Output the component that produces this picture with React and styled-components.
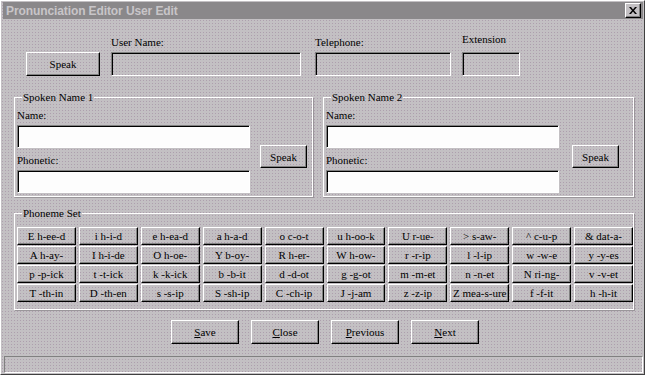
import React from "react";
import styled, { createGlobalStyle } from "styled-components";

const GlobalStyle = createGlobalStyle`
  html, body {
    margin: 0;
    padding: 0;
    background: #c3c0c3;
  }
  * {
    box-sizing: border-box;
  }
`;

const phonemes = [
  ["E h-ee-d", "i h-i-d", "e h-ea-d", "a h-a-d", "o c-o-t", "u h-oo-k", "U r-ue-", "> s-aw-", "^ c-u-p", "& dat-a-"],
  ["A h-ay-", "I h-i-de", "O h-oe-", "Y b-oy-", "R h-er-", "W h-ow-", "r -r-ip", "l -l-ip", "w -w-e", "y -y-es"],
  ["p -p-ick", "t -t-ick", "k -k-ick", "b -b-it", "d -d-ot", "g -g-ot", "m -m-et", "n -n-et", "N ri-ng-", "v -v-et"],
  ["T -th-in", "D -th-en", "s -s-ip", "S -sh-ip", "C -ch-ip", "J -j-am", "z -z-ip", "Z mea-s-ure", "f -f-it", "h -h-it"],
];

function App() {
  return (
    <>
      <GlobalStyle />
      <Window>
        <TitleBar>
          <Title>Pronunciation Editor User Edit</Title>
          <CloseBox aria-label="close">
            <svg width="8" height="7" viewBox="0 0 8 7">
              <path d="M0 0h2l2 2.5L6 0h2L5 3.5 8 7H6L4 4.5 2 7H0l3-3.5z" fill="#000" />
            </svg>
          </CloseBox>
        </TitleBar>

        <TopRow>
          <Button $w={74} $h={24}>Speak</Button>
          <Field $ml={11}>
            <Label>User Name:</Label>
            <TextBox $w={190} $h={24} />
          </Field>
          <Field $ml={14}>
            <Label>Telephone:</Label>
            <TextBox $w={136} $h={24} />
          </Field>
          <Field $ml={11}>
            <Label $lift={3}>Extension</Label>
            <TextBox $w={58} $h={24} />
          </Field>
        </TopRow>

        <GroupRow>
          <Group $w={299}>
            <Legend>Spoken Name 1</Legend>
            <GroupBody $gap={10}>
              <Fields>
                <Label>Name:</Label>
                <TextBox $w={233} $h={23} $white />
                <Label $top={6}>Phonetic:</Label>
                <TextBox $w={233} $h={23} $white />
              </Fields>
              <Button $w={47} $h={23} $mt={36}>Speak</Button>
            </GroupBody>
          </Group>
          <Group $w={311}>
            <Legend>Spoken Name 2</Legend>
            <GroupBody $gap={13}>
              <Fields>
                <Label>Name:</Label>
                <TextBox $w={233} $h={23} $white />
                <Label $top={6}>Phonetic:</Label>
                <TextBox $w={233} $h={23} $white />
              </Fields>
              <Button $w={47} $h={23} $mt={36}>Speak</Button>
            </GroupBody>
          </Group>
        </GroupRow>

        <PhonemeGroup>
          <Legend>Phoneme Set</Legend>
          <PhonemeGrid>
            {phonemes.flat().map((p) => (
              <PhonemeButton key={p}>{p}</PhonemeButton>
            ))}
          </PhonemeGrid>
        </PhonemeGroup>

        <ActionRow>
          <Button $w={68} $h={24}><u>S</u>ave</Button>
          <Button $w={68} $h={24}><u>C</u>lose</Button>
          <Button $w={68} $h={24}><u>P</u>revious</Button>
          <Button $w={68} $h={24}><u>N</u>ext</Button>
        </ActionRow>

        <StatusBar />
      </Window>
    </>
  );
}

export default App;

const Window = styled.div`
  width: 645px;
  height: 375px;
  display: flex;
  flex-direction: column;
  padding: 1px 1px 1px 2px;
  border: 1px solid;
  border-color: #ffffff #404040 #404040 #ffffff;
  background-color: #c3c0c3;
  background-image: radial-gradient(circle, #ad9fad 0.7px, transparent 0.8px);
  background-size: 3px 3px;
  font-family: "Liberation Serif", "Times New Roman", serif;
  font-size: 11px;
  color: #000;
`;

const TitleBar = styled.div`
  height: 18px;
  display: flex;
  align-items: center;
  justify-content: space-between;
  padding: 0 2px 0 3px;
  background-color: #8a888a;
`;

const Title = styled.span`
  font-family: "Liberation Sans", Arial, sans-serif;
  font-weight: bold;
  font-size: 12px;
  color: #c8c5c8;
  letter-spacing: -0.1px;
`;

const CloseBox = styled.button`
  width: 16px;
  height: 15px;
  padding: 0;
  display: flex;
  align-items: center;
  justify-content: center;
  background: #c3c0c3;
  border: 1px solid;
  border-color: #ffffff #000000 #000000 #ffffff;
  box-shadow: inset -1px -1px #808080;
`;

const TopRow = styled.div`
  display: flex;
  align-items: flex-end;
  padding: 14px 0 0 23px;
`;

const Field = styled.div`
  display: flex;
  flex-direction: column;
  margin-left: ${(p) => p.$ml || 0}px;
`;

const Label = styled.div`
  line-height: 13px;
  margin-top: ${(p) => p.$top || 0}px;
  margin-bottom: ${(p) => 3 + (p.$lift || 0)}px;
  white-space: nowrap;
`;

const TextBox = styled.div`
  width: ${(p) => p.$w}px;
  height: ${(p) => p.$h}px;
  border: 1px solid;
  border-color: #808080 #ffffff #ffffff #808080;
  box-shadow: inset 1px 1px #000000;
  background: ${(p) => (p.$white ? "#fdfdfd" : "transparent")};
`;

const Button = styled.button`
  width: ${(p) => p.$w}px;
  height: ${(p) => p.$h}px;
  margin-top: ${(p) => p.$mt || 0}px;
  padding: 0;
  flex: none;
  font-family: inherit;
  font-size: 11px;
  font-weight: normal;
  color: #000;
  background: transparent;
  border: 1px solid;
  border-color: #ffffff #000000 #000000 #ffffff;
  box-shadow: inset -1px -1px #808080;
  u {
    text-underline-offset: 1px;
  }
`;

const GroupRow = styled.div`
  display: flex;
  gap: 10px;
  padding-left: 11px;
  margin-top: 15px;
`;

const Group = styled.fieldset`
  width: ${(p) => p.$w}px;
  margin: 0;
  padding: 0 3px 3px 2px;
  min-width: 0;
  border: 1px solid #ffffff;
  box-shadow: 1px 1px #9a969a;
`;

const Legend = styled.legend`
  padding: 0 1px;
  margin-left: 5px;
  line-height: 13px;
`;

const GroupBody = styled.div`
  display: flex;
  align-items: flex-start;
  gap: ${(p) => p.$gap}px;
  padding-top: 5px;
`;

const Fields = styled.div`
  display: flex;
  flex-direction: column;
`;

const PhonemeGroup = styled.fieldset`
  width: 620px;
  margin: 10px 0 0 11px;
  padding: 0 0 7px 2px;
  min-width: 0;
  border: 1px solid #ffffff;
  box-shadow: 1px 1px #9a969a;
`;

const PhonemeGrid = styled.div`
  display: grid;
  grid-template-columns: repeat(10, 1fr);
  grid-auto-rows: 18px;
  column-gap: 3px;
  row-gap: 1px;
  padding-top: 7px;
`;

const PhonemeButton = styled.button`
  padding: 0;
  font-family: inherit;
  font-size: 11px;
  font-weight: normal;
  color: #000;
  white-space: nowrap;
  background: transparent;
  border: 1px solid;
  border-color: #ffffff #000000 #000000 #ffffff;
  box-shadow: inset -1px -1px #808080;
`;

const ActionRow = styled.div`
  display: flex;
  justify-content: center;
  gap: 12px;
  padding-left: 4px;
  margin-top: 10px;
`;

const StatusBar = styled.div`
  height: 17px;
  margin: 12px 0 0 1px;
  border: 1px solid;
  border-color: #808080 #ffffff #ffffff #808080;
`;
